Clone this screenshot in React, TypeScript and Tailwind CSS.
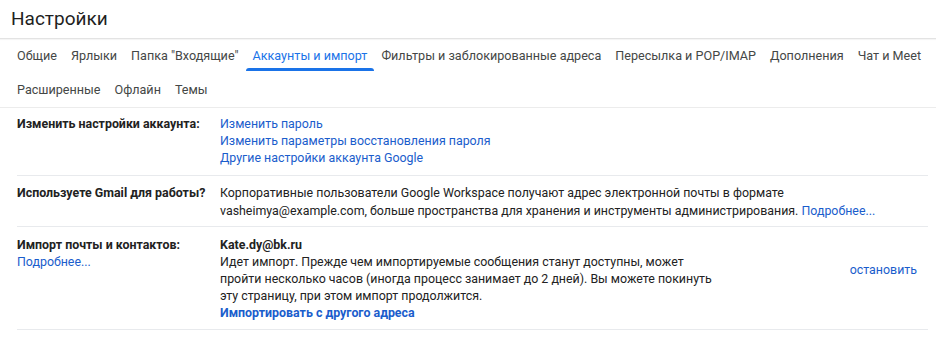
import React from "react";

const tabsRow1 = [
  "Общие",
  "Ярлыки",
  'Папка "Входящие"',
  "Аккаунты и импорт",
  "Фильтры и заблокированные адреса",
  "Пересылка и POP/IMAP",
  "Дополнения",
  "Чат и Meet",
];
const tabsRow2 = ["Расширенные", "Офлайн", "Темы"];

function Tab({ label }: { label: string }) {
  const active = label === "Аккаунты и импорт";
  return (
    <div
      className={`relative flex h-[34px] items-center whitespace-nowrap px-[7px] text-[12.6px] ${
        active ? "text-[#1a73e8]" : "text-[#444746]"
      }`}
    >
      {label}
      {active && <span className="absolute bottom-[2px] left-0 right-0 h-[3px] rounded-t bg-[#1a73e8]" />}
    </div>
  );
}

function Row({ label, children }: { label: React.ReactNode; children: React.ReactNode }) {
  return (
    <div className="ml-[17px] mr-[8px] flex border-b border-[#e8eaed]">
      {label}
      {children}
    </div>
  );
}

export default function App() {
  return (
    <div className="h-[342px] w-[936px] overflow-hidden bg-white" style={{ fontFamily: "Roboto, Arial, sans-serif" }}>
      <div className="h-[39px] border-b border-[#e3e3e3] pl-[11px] pt-[6px] text-[19px] leading-[26px] text-[#1f1f1f] shadow-[0_1px_1px_rgba(0,0,0,0.04)]">
        Настройки
      </div>
      <div className="border-b border-[#ececec] px-[10px]">
        <div className="flex">
          {tabsRow1.map((t) => (
            <Tab key={t} label={t} />
          ))}
        </div>
        <div className="flex">
          {tabsRow2.map((t) => (
            <Tab key={t} label={t} />
          ))}
        </div>
      </div>

      <div className="text-[12.4px] leading-[17px] text-[#222]">
        <Row label={<div className="w-[203px] shrink-0 whitespace-nowrap pt-[7px] font-bold">Изменить настройки аккаунта:</div>}>
          <div className="flex flex-col pb-[9px] pt-[7px] text-[#1a5dcc]">
            <span>Изменить пароль</span>
            <span>Изменить параметры восстановления пароля</span>
            <span>Другие настройки аккаунта Google</span>
          </div>
        </Row>
        <Row label={<div className="w-[203px] shrink-0 whitespace-nowrap pt-[8px] font-bold">Используете Gmail для работы?</div>}>
          <div className="pb-[6px] pt-[8px] leading-[18px]">
            Корпоративные пользователи Google Workspace получают адрес электронной почты в формате
            <br />
            vasheimya@example.com, больше пространства для хранения и инструменты администрирования.{" "}
            <span className="text-[#1a5dcc]">Подробнее...</span>
          </div>
        </Row>
        <Row
          label={
            <div className="flex w-[203px] shrink-0 flex-col whitespace-nowrap pt-[9px]">
              <span className="font-bold">Импорт почты и контактов:</span>
              <span className="text-[#1a5dcc]">Подробнее...</span>
            </div>
          }
        >
          <div className="w-[495px] pb-[8px] pt-[9px]">
            <div className="font-bold">Kate.dy@bk.ru</div>
            <div>
              Идет импорт. Прежде чем импортируемые сообщения станут доступны, может пройти несколько часов (иногда
              процесс занимает до 2 дней). Вы можете покинуть эту страницу, при этом импорт продолжится.
            </div>
            <div className="font-bold text-[#1a5dcc]">Импортировать с другого адреса</div>
          </div>
          <div className="flex flex-1 items-center justify-end pb-[18px] pr-[11px] text-[#1a5dcc]">остановить</div>
        </Row>
      </div>
    </div>
  );
}
